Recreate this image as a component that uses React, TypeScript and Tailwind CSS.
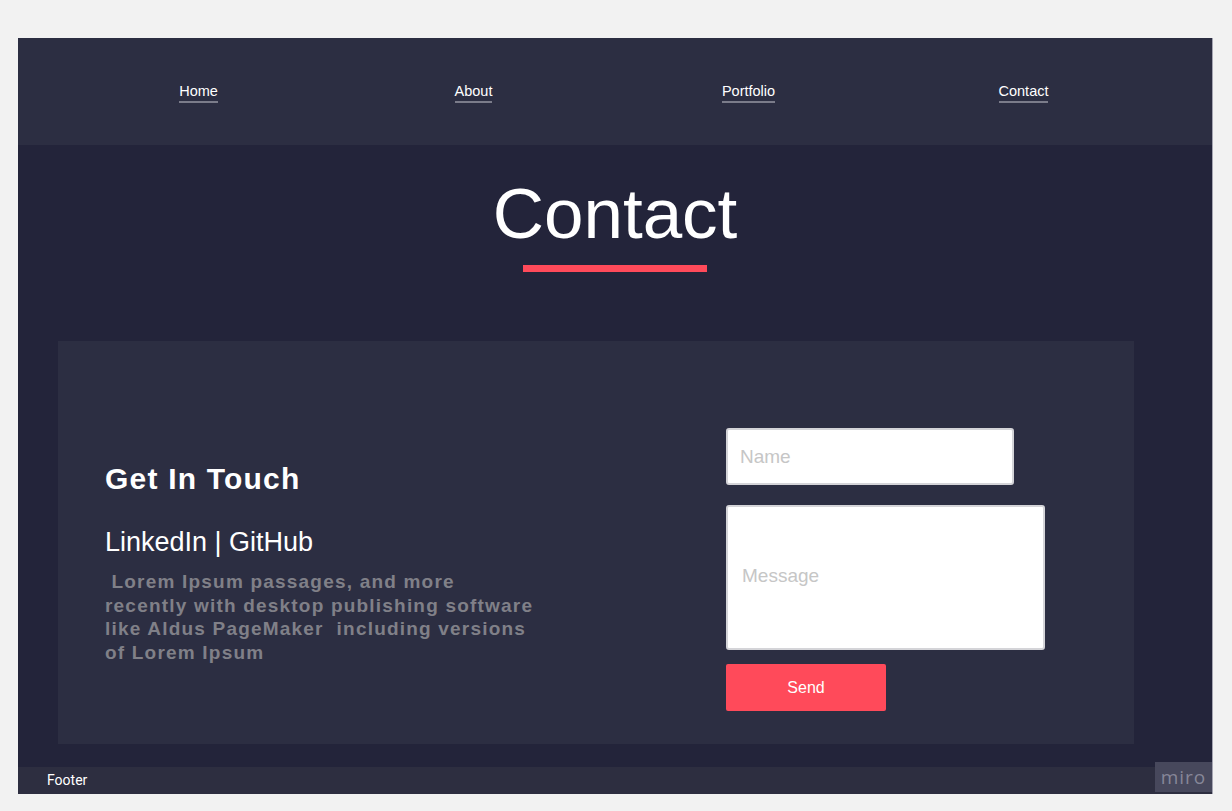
import React from "react";

const navItems = ["Home", "About", "Portfolio", "Contact"];

export default function App() {
  return (
    <div className="relative w-[1232px] h-[811px] overflow-hidden bg-[#f2f2f2] pt-[38px] pl-[18px] font-['Liberation_Sans',Arial,sans-serif]">
      <div className="flex w-[1195px] flex-col border-r border-[#a5a5b2]">
        {/* Header */}
        <header className="h-[107px] bg-[#2c2e42] pt-[45px]">
          <nav className="ml-[43px] grid w-[1100px] grid-cols-4">
            {navItems.map((item) => (
              <div key={item} className="flex justify-center">
                <a className="border-b-2 border-[#7b7c8a] pb-[1px] text-[14.5px] leading-[17px] text-white">
                  {item}
                </a>
              </div>
            ))}
          </nav>
        </header>

        {/* Main */}
        <main className="flex h-[622px] flex-col bg-[#23243a] pt-[33px]">
          <h1 className="text-center text-[71px] leading-[72px] text-white">Contact</h1>
          <div className="mx-auto mt-[15px] h-[7px] w-[184px] bg-[#ff4a5a]" />

          <section className="ml-[40px] mt-[69px] flex h-[403px] w-[1076px] bg-[#2c2e42]">
            <div className="w-[668px] shrink-0 pl-[47px] pt-[123px]">
              <h2 className="text-[30px] font-bold leading-none tracking-[1.2px] text-white">Get In Touch</h2>
              <p className="mt-[35px] text-[27px] leading-none text-white">LinkedIn | GitHub</p>
              <p className="mt-[14px] w-[434px] whitespace-pre-wrap text-[19px] font-bold leading-[23.6px] tracking-[1.2px] text-[#808088]">
                {" Lorem Ipsum passages, and more recently with desktop publishing software like Aldus PageMaker  including versions of Lorem Ipsum"}
              </p>
            </div>
            <form className="flex flex-col pt-[87px]" onSubmit={(e) => e.preventDefault()}>
              <input
                type="text"
                placeholder="Name"
                className="h-[57px] w-[288px] rounded-[3px] border-2 border-[#d4d4d8] bg-white px-[12px] text-[19px] text-[#333] outline-none placeholder:text-[#c6c6c6]"
              />
              <textarea
                placeholder="Message"
                className="mt-[20px] h-[145px] w-[319px] resize-none rounded-[3px] border-2 border-[#d4d4d8] bg-white px-[14px] pt-[58px] text-[19px] leading-[22px] text-[#333] outline-none placeholder:text-[#c6c6c6]"
              />
              <button
                type="submit"
                className="mt-[14px] h-[47px] w-[160px] rounded-[2px] bg-[#ff4a5a] text-[16px] text-white"
              >
                Send
              </button>
            </form>
          </section>
        </main>

        {/* Footer */}
        <footer className="flex h-[27px] items-center bg-[#2d2e40] pl-[29px]">
          <span className="font-['Roboto',sans-serif] text-[14px] text-white">Footer</span>
        </footer>
      </div>

      {/* miro badge */}
      <div className="absolute left-[1155px] top-[762px] flex h-[30px] w-[57px] items-center justify-center bg-[#47485c] pt-[1px] font-['Open_Sans',sans-serif] text-[19px] font-medium tracking-[1px] text-[#868698]">
        miro
      </div>
    </div>
  );
}
